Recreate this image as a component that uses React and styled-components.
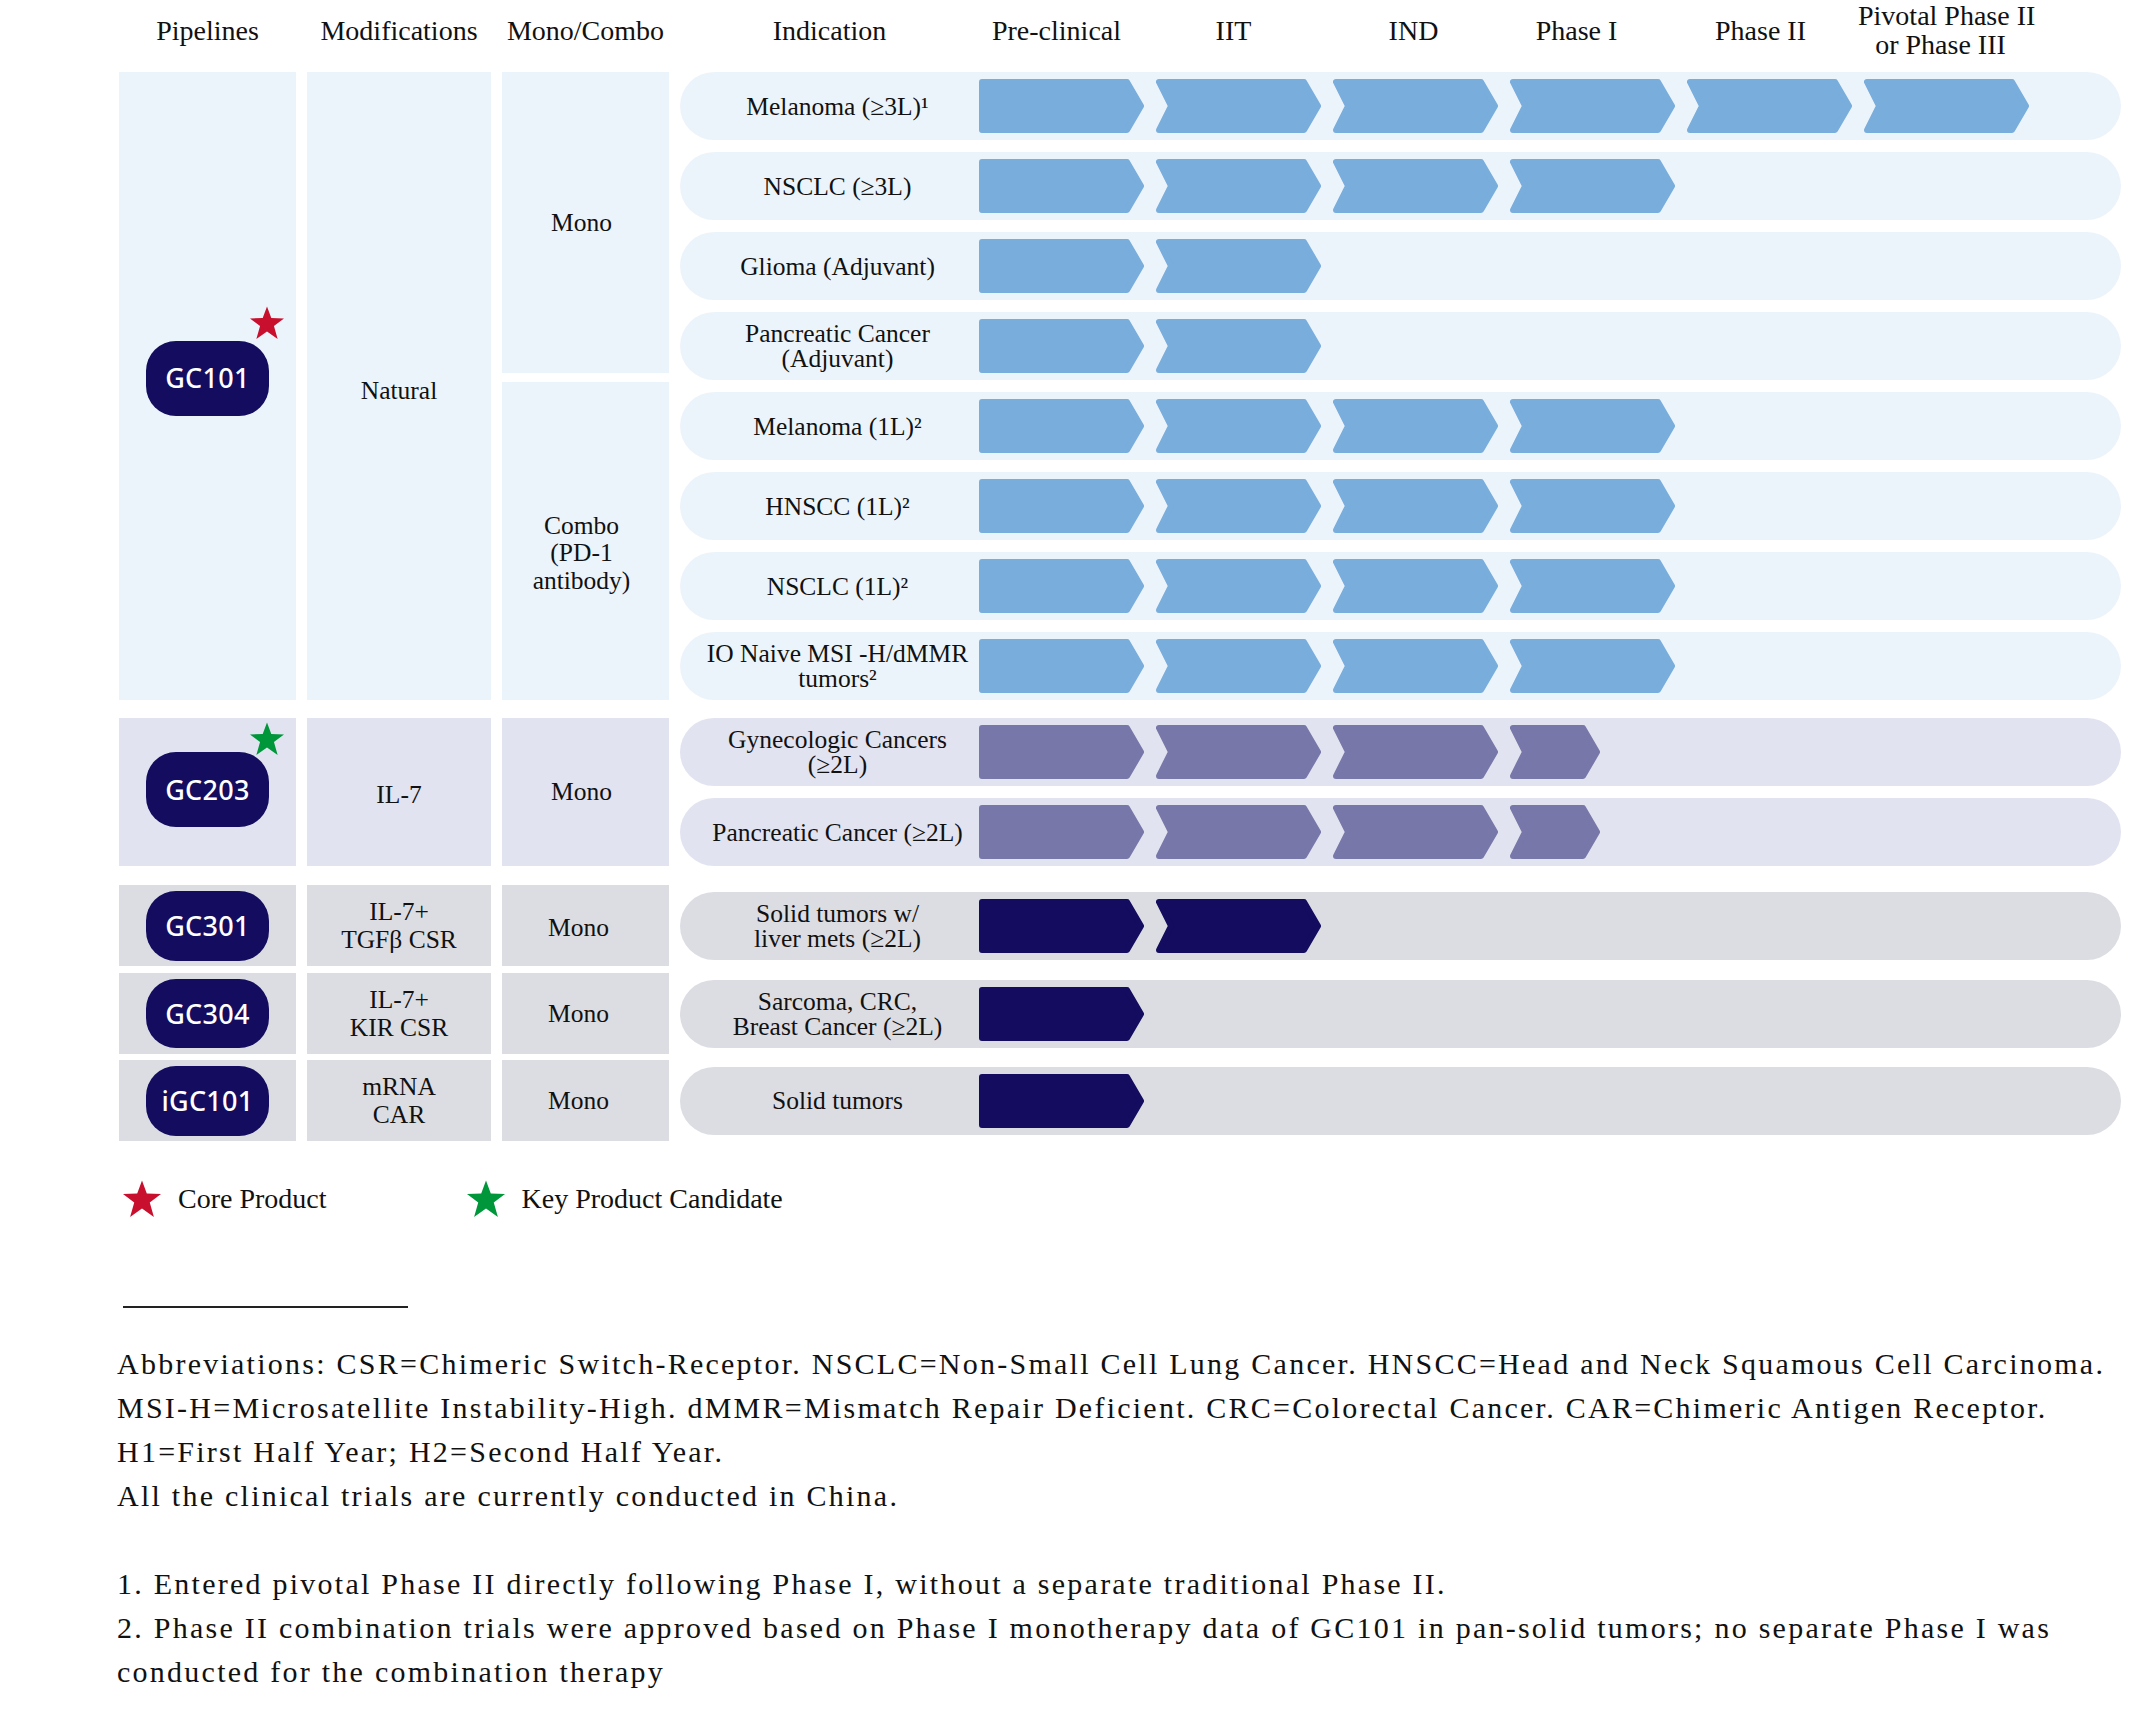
import React from 'react';
import styled, { createGlobalStyle } from 'styled-components';

const GlobalStyle = createGlobalStyle`
  body {
    margin: 0;
    background: #fff;
    color: #111;
    font-family: "Liberation Serif", "Times New Roman", serif;
  }
`;

const THEMES = {
  natural: { bg: '#ECF4FB', bar: '#78ADDC' },
  il7: { bg: '#E1E3F0', bar: '#7877A9' },
  csr: { bg: '#DCDDE3', bar: '#130C5F' },
};

const PHASES = [
  { label: ['Pre-clinical'], shift: -5 },
  { label: ['IIT'], shift: -5 },
  { label: ['IND'], shift: -2 },
  { label: ['Phase I'], shift: -16 },
  { label: ['Phase II'], shift: -9 },
  { label: ['Pivotal Phase II', 'or Phase III'], shift: -6 },
];

const GROUPS = [
  {
    id: 'GC101',
    star: 'core',
    starTop: -35,
    badgeH: 75,
    lift: 16,
    theme: 'natural',
    mod: { label: ['Natural'], pt: 10 },
    mono: [
      { label: ['Mono'], grow: 301 },
      { label: ['Combo', '(PD-1', 'antibody)'], grow: 317, pt: 24 },
    ],
    rows: [
      { label: ['Melanoma (≥3L)¹'], bars: 6 },
      { label: ['NSCLC (≥3L)'], bars: 4 },
      { label: ['Glioma (Adjuvant)'], bars: 2 },
      { label: ['Pancreatic Cancer', '(Adjuvant)'], bars: 2 },
      { label: ['Melanoma (1L)²'], bars: 4 },
      { label: ['HNSCC (1L)²'], bars: 4 },
      { label: ['NSCLC (1L)²'], bars: 4 },
      { label: ['IO Naive MSI -H/dMMR', 'tumors²'], bars: 4 },
    ],
  },
  {
    id: 'GC203',
    star: 'key',
    starTop: -30,
    badgeH: 75,
    lift: 5,
    theme: 'il7',
    gap: 18,
    mod: { label: ['IL-7'], pt: 6 },
    mono: [{ label: ['Mono'], grow: 1 }],
    rows: [
      { label: ['Gynecologic Cancers', '(≥2L)'], bars: 3, half: true },
      { label: ['Pancreatic Cancer (≥2L)'], bars: 3, half: true },
    ],
  },
  {
    id: 'GC301',
    badgeH: 70,
    theme: 'csr',
    gap: 19,
    single: true,
    mod: { label: ['IL-7+', 'TGFβ CSR'] },
    mono: [{ label: ['Mono'], grow: 1, pt: 4 }],
    rows: [{ label: ['Solid tumors w/', 'liver mets (≥2L)'], bars: 2 }],
  },
  {
    id: 'GC304',
    badgeH: 69,
    theme: 'csr',
    gap: 7,
    single: true,
    mod: { label: ['IL-7+', 'KIR CSR'] },
    mono: [{ label: ['Mono'], grow: 1 }],
    rows: [{ label: ['Sarcoma, CRC,', 'Breast Cancer (≥2L)'], bars: 1 }],
  },
  {
    id: 'iGC101',
    badgeH: 70,
    theme: 'csr',
    gap: 6,
    single: true,
    mod: { label: ['mRNA', 'CAR'] },
    mono: [{ label: ['Mono'], grow: 1 }],
    rows: [{ label: ['Solid tumors'], bars: 1 }],
  },
];

const NOTES = [
  'Abbreviations: CSR=Chimeric Switch-Receptor. NSCLC=Non-Small Cell Lung Cancer. HNSCC=Head and Neck Squamous Cell Carcinoma.',
  'MSI-H=Microsatellite Instability-High. dMMR=Mismatch Repair Deficient. CRC=Colorectal Cancer. CAR=Chimeric Antigen Receptor.',
  'H1=First Half Year; H2=Second Half Year.',
  'All the clinical trials are currently conducted in China.',
  '',
  '1. Entered pivotal Phase II directly following Phase I, without a separate traditional Phase II.',
  '2. Phase II combination trials were approved based on Phase I monotherapy data of GC101 in pan-solid tumors; no separate Phase I was',
  'conducted for the combination therapy',
];

const STAR_COLORS = { core: '#C8102E', key: '#00963A' };

const COLUMNS = '177px 184px 167px 1441px';
const LABEL_W = 299;
const BAR_W = 165;
const BAR_GAP = 12;

const Page = styled.div`
  width: 2139px;
  padding: 0 0 40px 119px;
  box-sizing: border-box;
`;

const HeaderRow = styled.div`
  display: grid;
  grid-template-columns: ${COLUMNS};
  column-gap: 11px;
  height: 60px;
  margin-bottom: 12px;
  align-items: center;
`;

const HeadLabel = styled.div`
  font-size: 28px;
  line-height: 29px;
  text-align: center;
  white-space: nowrap;
`;

const PhaseHead = styled.div`
  display: flex;
  align-items: center;
`;

const PhaseLabels = styled.div`
  display: flex;
  gap: ${BAR_GAP}px;
  align-items: center;
`;

const IndicationHead = styled(HeadLabel)`
  width: ${LABEL_W}px;
  flex-shrink: 0;
`;

const PhaseLabel = styled(HeadLabel)`
  width: ${BAR_W}px;
  flex-shrink: 0;
  transform: translateX(${(p) => p.$shift}px);
`;

const Group = styled.div`
  display: grid;
  grid-template-columns: ${COLUMNS};
  column-gap: 11px;
  margin-top: ${(p) => p.$gap || 0}px;
`;

const Cell = styled.div`
  background: ${(p) => p.$bg};
  display: flex;
  align-items: center;
  justify-content: center;
  text-align: center;
  font-size: 25.5px;
  line-height: 27.5px;
  flex: ${(p) => p.$grow || 1} 1 0;
  min-height: ${(p) => (p.$single ? 81 : 0)}px;
`;

const CellText = styled.div`
  padding-top: ${(p) => p.$pt || 0}px;
  padding-right: ${(p) => p.$pr || 0}px;
`;

const MonoStack = styled.div`
  display: flex;
  flex-direction: column;
  gap: 9px;
`;

const BadgeWrap = styled.div`
  position: relative;
  margin-bottom: ${(p) => p.$lift || 0}px;
`;

const Badge = styled.div`
  width: 123px;
  height: ${(p) => p.$h}px;
  border-radius: 30px;
  background: #130C5F;
  color: #fff;
  display: flex;
  align-items: center;
  justify-content: center;
  font-family: "Noto Sans", "Open Sans", sans-serif;
  font-weight: 500;
  font-size: 27px;
  letter-spacing: 0.3px;
`;

const BadgeStar = styled.div`
  position: absolute;
  right: -16px;
  top: ${(p) => p.$top}px;
  display: flex;
`;

const PillList = styled.div`
  display: flex;
  flex-direction: column;
  justify-content: center;
  gap: 12px;
`;

const Pill = styled.div`
  height: 68px;
  border-radius: 34px;
  background: ${(p) => p.$bg};
  display: flex;
  align-items: center;
`;

const PillLabel = styled.div`
  width: ${LABEL_W}px;
  box-sizing: border-box;
  padding-left: 16px;
  flex-shrink: 0;
  text-align: center;
  font-size: 25.5px;
  line-height: 25px;
  white-space: nowrap;
`;

const Bars = styled.div`
  display: flex;
  gap: ${BAR_GAP}px;
`;

const Legend = styled.div`
  display: flex;
  align-items: center;
  gap: 139px;
  height: 40px;
  margin-top: 38px;
  padding-left: 3px;
`;

const LegendItem = styled.div`
  display: flex;
  align-items: center;
  gap: 16px;
  font-size: 28px;
`;

const Rule = styled.div`
  width: 285px;
  height: 2px;
  background: #222;
  margin: 87px 0 0 4px;
`;

const Notes = styled.div`
  margin: 34px 0 0 -2px;
  font-size: 30px;
  line-height: 44px;
  letter-spacing: 2.25px;
`;

const NoteLine = styled.div`
  white-space: nowrap;
  min-height: 44px;
`;

function Star({ color, w = 38, h = 36 }) {
  return (
    <svg width={w} height={h} viewBox="0 0 24 23" aria-hidden="true">
      <polygon
        fill={color}
        points="12,0.3 14.9,8.2 23.5,8.4 16.7,13.6 19.2,22.4 12,17.2 4.8,22.4 7.3,13.6 0.5,8.4 9.1,8.2"
      />
    </svg>
  );
}

function Chevron({ color, first, width = BAR_W }) {
  const h = 54;
  const r = 3;
  const tip = width - r;
  const shoulder = width - 17;
  const d = first
    ? `M${r},${r} L${shoulder},${r} L${tip},${h / 2} L${shoulder},${h - r} L${r},${h - r} Z`
    : `M${r},${r} L${shoulder},${r} L${tip},${h / 2} L${shoulder},${h - r} L${r},${h - r} L${r + 12},${h / 2} Z`;
  return (
    <svg width={width} height={h} viewBox={`0 0 ${width} ${h}`} aria-hidden="true">
      <path d={d} fill={color} stroke={color} strokeWidth={r * 2} strokeLinejoin="round" />
    </svg>
  );
}

function Lines({ lines }) {
  return lines.map((l, i) => (
    <React.Fragment key={i}>
      {i > 0 && <br />}
      {l}
    </React.Fragment>
  ));
}

function PipelineGroup({ group }) {
  const theme = THEMES[group.theme];
  return (
    <Group $gap={group.gap}>
      <Cell $bg={theme.bg} $single={group.single}>
        <BadgeWrap $lift={group.lift}>
          <Badge $h={group.badgeH}>{group.id}</Badge>
          {group.star && (
            <BadgeStar $top={group.starTop}>
              <Star color={STAR_COLORS[group.star]} w={36} h={34} />
            </BadgeStar>
          )}
        </BadgeWrap>
      </Cell>
      <Cell $bg={theme.bg} $single={group.single}>
        <CellText $pt={group.mod.pt}>
          <Lines lines={group.mod.label} />
        </CellText>
      </Cell>
      <MonoStack>
        {group.mono.map((m, i) => (
          <Cell key={i} $bg={theme.bg} $grow={m.grow} $single={group.single}>
            <CellText $pt={m.pt} $pr={group.single ? 14 : 8}>
              <Lines lines={m.label} />
            </CellText>
          </Cell>
        ))}
      </MonoStack>
      <PillList>
        {group.rows.map((row, i) => (
          <Pill key={i} $bg={theme.bg}>
            <PillLabel>
              <Lines lines={row.label} />
            </PillLabel>
            <Bars>
              {Array.from({ length: row.bars }).map((_, j) => (
                <Chevron key={j} color={theme.bar} first={j === 0} />
              ))}
              {row.half && <Chevron color={theme.bar} width={90} />}
            </Bars>
          </Pill>
        ))}
      </PillList>
    </Group>
  );
}

export default function App() {
  return (
    <>
      <GlobalStyle />
      <Page>
        <HeaderRow>
          <HeadLabel>Pipelines</HeadLabel>
          <HeadLabel>Modifications</HeadLabel>
          <HeadLabel>Mono/Combo</HeadLabel>
          <PhaseHead>
            <IndicationHead>Indication</IndicationHead>
            <PhaseLabels>
              {PHASES.map((p, i) => (
                <PhaseLabel key={i} $shift={p.shift}>
                  <Lines lines={p.label} />
                </PhaseLabel>
              ))}
            </PhaseLabels>
          </PhaseHead>
        </HeaderRow>

        {GROUPS.map((g) => (
          <PipelineGroup key={g.id} group={g} />
        ))}

        <Legend>
          <LegendItem>
            <Star color={STAR_COLORS.core} w={40} h={38} />
            Core Product
          </LegendItem>
          <LegendItem>
            <Star color={STAR_COLORS.key} w={40} h={38} />
            Key Product Candidate
          </LegendItem>
        </Legend>

        <Rule />

        <Notes>
          {NOTES.map((n, i) => (
            <NoteLine key={i}>{n}</NoteLine>
          ))}
        </Notes>
      </Page>
    </>
  );
}
